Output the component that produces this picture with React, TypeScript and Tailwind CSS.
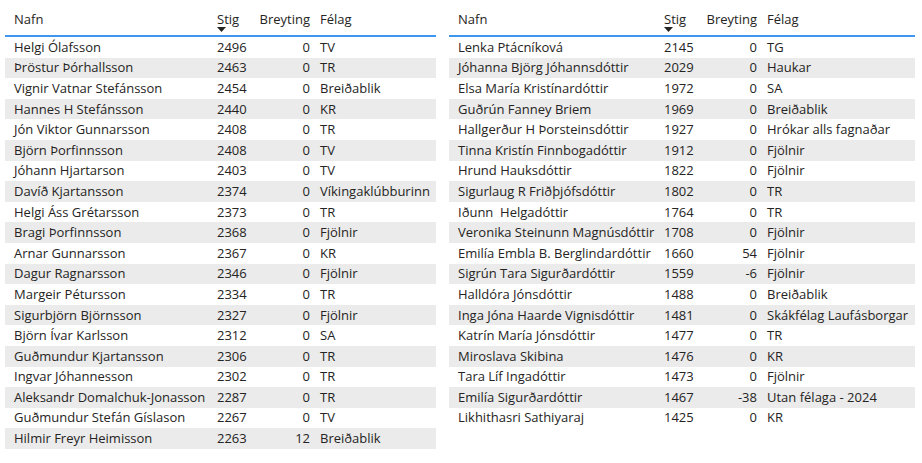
type Row = [string, number, number, string];

const left: Row[] = [
  ["Helgi Ólafsson", 2496, 0, "TV"],
  ["Þröstur Þórhallsson", 2463, 0, "TR"],
  ["Vignir Vatnar Stefánsson", 2454, 0, "Breiðablik"],
  ["Hannes H Stefánsson", 2440, 0, "KR"],
  ["Jón Viktor Gunnarsson", 2408, 0, "TR"],
  ["Björn Þorfinnsson", 2408, 0, "TV"],
  ["Jóhann Hjartarson", 2403, 0, "TV"],
  ["Davíð Kjartansson", 2374, 0, "Víkingaklúbburinn"],
  ["Helgi Áss Grétarsson", 2373, 0, "TR"],
  ["Bragi Þorfinnsson", 2368, 0, "Fjölnir"],
  ["Arnar Gunnarsson", 2367, 0, "KR"],
  ["Dagur Ragnarsson", 2346, 0, "Fjölnir"],
  ["Margeir Pétursson", 2334, 0, "TR"],
  ["Sigurbjörn Björnsson", 2327, 0, "Fjölnir"],
  ["Björn Ívar Karlsson", 2312, 0, "SA"],
  ["Guðmundur Kjartansson", 2306, 0, "TR"],
  ["Ingvar Jóhannesson", 2302, 0, "TR"],
  ["Aleksandr Domalchuk-Jonasson", 2287, 0, "TR"],
  ["Guðmundur Stefán Gíslason", 2267, 0, "TV"],
  ["Hilmir Freyr Heimisson", 2263, 12, "Breiðablik"],
];

const right: Row[] = [
  ["Lenka Ptácníková", 2145, 0, "TG"],
  ["Jóhanna Björg Jóhannsdóttir", 2029, 0, "Haukar"],
  ["Elsa María Kristínardóttir", 1972, 0, "SA"],
  ["Guðrún Fanney Briem", 1969, 0, "Breiðablik"],
  ["Hallgerður H Þorsteinsdóttir", 1927, 0, "Hrókar alls fagnaðar"],
  ["Tinna Kristín Finnbogadóttir", 1912, 0, "Fjölnir"],
  ["Hrund Hauksdóttir", 1822, 0, "Fjölnir"],
  ["Sigurlaug R Friðþjófsdóttir", 1802, 0, "TR"],
  ["Iðunn  Helgadóttir", 1764, 0, "TR"],
  ["Veronika Steinunn Magnúsdóttir", 1708, 0, "Fjölnir"],
  ["Emilía Embla B. Berglindardóttir", 1660, 54, "Fjölnir"],
  ["Sigrún Tara Sigurðardóttir", 1559, -6, "Fjölnir"],
  ["Halldóra Jónsdóttir", 1488, 0, "Breiðablik"],
  ["Inga Jóna Haarde Vignisdóttir", 1481, 0, "Skákfélag Laufásborgar"],
  ["Katrín María Jónsdóttir", 1477, 0, "TR"],
  ["Miroslava Skibina", 1476, 0, "KR"],
  ["Tara Líf Ingadóttir", 1473, 0, "Fjölnir"],
  ["Emilía Sigurðardóttir", 1467, -38, "Utan félaga - 2024"],
  ["Likhithasri Sathiyaraj", 1425, 0, "KR"],
];

function Table({ rows, cols }: { rows: Row[]; cols: string }) {
  return (
    <div className="flex flex-col">
      <div
        className="grid h-[36px] border-b-2 border-[#3d97ec] text-[#252423]"
        style={{ gridTemplateColumns: cols }}
      >
        <div className="pl-[9px] pt-[9px]">Nafn</div>
        <div className="relative pl-[5px] pt-[9px]">
          Stig
          <svg className="absolute left-[5px] top-[26px]" width="9" height="5" viewBox="0 0 9 5">
            <path d="M0 0H9L4.5 5Z" fill="#252423" />
          </svg>
        </div>
        <div className="pr-[5px] pt-[9px] text-right">Breyting</div>
        <div className="pl-[5px] pt-[9px]">Félag</div>
      </div>
      {rows.map((r, i) => (
        <div
          key={i}
          className={`grid h-[20.6px] items-center leading-none text-[#252423] ${
            i % 2 === 1 ? "bg-[#ebebeb]" : ""
          }`}
          style={{ gridTemplateColumns: cols }}
        >
          <div className="whitespace-pre pl-[9px]">{r[0]}</div>
          <div className="pl-[5px]">{r[1]}</div>
          <div className="pr-[5px] text-right">{r[2]}</div>
          <div className="whitespace-nowrap pl-[5px]">{r[3]}</div>
        </div>
      ))}
    </div>
  );
}

export default function App() {
  return (
    <div className="flex h-[463px] w-[922px] bg-white pt-px text-[13px] font-['Open_Sans',sans-serif]">
      <div className="ml-[5px] w-[431px]">
        <Table rows={left} cols="207px 41px 62px 1fr" />
      </div>
      <div className="ml-[13px] w-[466px]">
        <Table rows={right} cols="210px 41px 62px 1fr" />
      </div>
    </div>
  );
}
